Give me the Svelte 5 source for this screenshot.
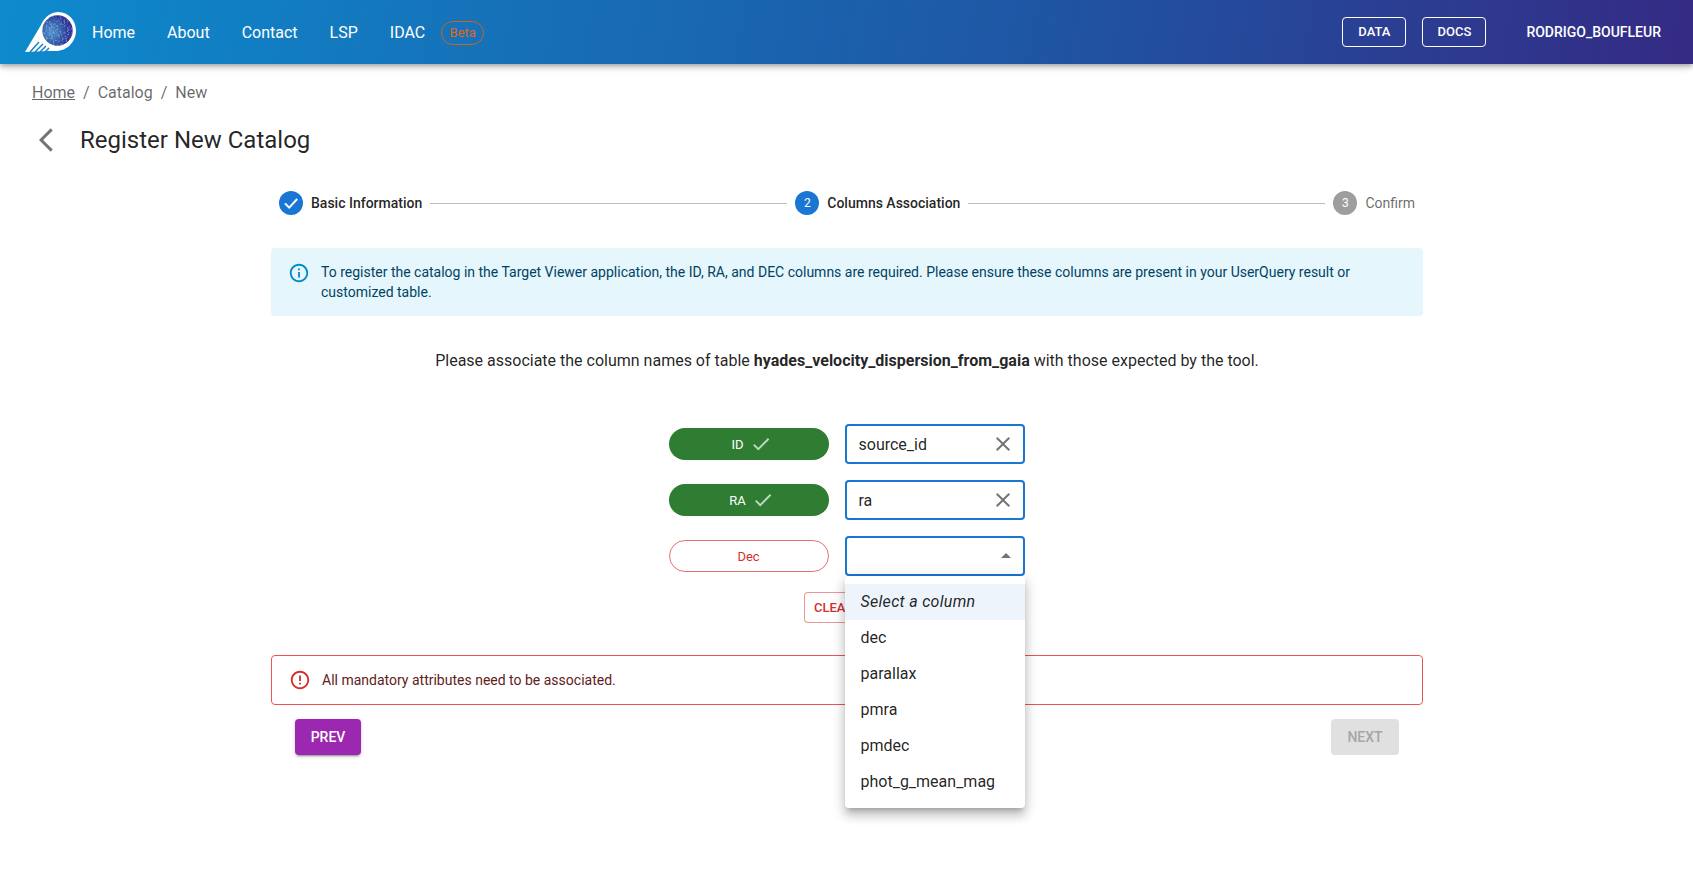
<script>
  const nav = ['Home', 'About', 'Contact', 'LSP', 'IDAC'];
  const options = ['dec', 'parallax', 'pmra', 'pmdec', 'phot_g_mean_mag'];
</script>

<header class="bar">
  <svg class="logo" viewBox="0 0 54 42" width="54" height="42" aria-hidden="true">
    <defs>
      <radialGradient id="globe" cx="0.3" cy="0.55" r="0.75">
        <stop offset="0" stop-color="#4f93cc" />
        <stop offset="0.42" stop-color="#3563ad" />
        <stop offset="0.72" stop-color="#2c3a98" />
        <stop offset="1" stop-color="#2a2a8a" />
      </radialGradient>
      <filter id="speckle" x="0" y="0" width="100%" height="100%">
        <feTurbulence type="fractalNoise" baseFrequency="0.55" numOctaves="2" seed="4" />
        <feColorMatrix values="0 0 0 0 0.55  0 0 0 0 0.65  0 0 0 0 0.95  0 0 0 1.6 -0.75" />
        <feComposite in2="SourceAlpha" operator="in" />
      </filter>
    </defs>
    <path d="M1 41 L17 14 C20 7 26 1.5 33.5 1 C44 0.5 52 9 52 19.5 C52 31 43 40 32 40 L25 40 Z" fill="#fff" />
    <circle cx="33.5" cy="19.5" r="15.2" fill="url(#globe)" />
    <circle cx="33.5" cy="19.5" r="15.2" filter="url(#speckle)" />
    <g stroke="#1180c6" stroke-width="1.4" fill="none">
      <path d="M6 41 L15 31" /><path d="M11 41 L19 33" /><path d="M16 41 L22 35" /><path d="M21 41 L25 37" />
    </g>
  </svg>
  <nav class="nav">
    {#each nav as item}
      <a class="nav-link" href="#top">{item}</a>
    {/each}
    <span class="beta">Beta</span>
  </nav>
  <div class="bar-right">
    <button class="outline">DATA</button>
    <button class="outline">DOCS</button>
    <span class="user">RODRIGO_BOUFLEUR</span>
  </div>
</header>

<main class="page">
  <div class="crumbs">
    <a href="#top">Home</a><span class="sep">/</span><span>Catalog</span><span class="sep">/</span><span>New</span>
  </div>

  <div class="title-row">
    <svg class="back" viewBox="0 0 24 24" width="28" height="28" aria-hidden="true">
      <path d="M17.77 3.77 16 2 6 12l10 10 1.77-1.77L9.54 12z" fill="#757575" />
    </svg>
    <h1>Register New Catalog</h1>
  </div>

  <section class="content">
    <div class="stepper">
      <div class="step active">
        <svg class="step-icon" viewBox="0 0 24 24" width="24" height="24" aria-hidden="true">
          <circle cx="12" cy="12" r="12" fill="#1976d2" />
          <path d="M6 12.4 10.2 16.6 18.2 8" fill="none" stroke="#fff" stroke-width="2" />
        </svg>
        <span>Basic Information</span>
      </div>
      <div class="line"></div>
      <div class="step active">
        <span class="num blue">2</span>
        <span>Columns Association</span>
      </div>
      <div class="line"></div>
      <div class="step muted">
        <span class="num grey">3</span>
        <span>Confirm</span>
      </div>
    </div>

    <div class="alert info">
      <svg viewBox="0 0 24 24" width="22" height="22" aria-hidden="true">
        <path d="M11 7h2v2h-2zm0 4h2v6h-2zm1-9C6.48 2 2 6.48 2 12s4.48 10 10 10 10-4.48 10-10S17.52 2 12 2m0 18c-4.41 0-8-3.59-8-8s3.59-8 8-8 8 3.59 8 8-3.59 8-8 8" fill="#0288d1" />
      </svg>
      <p>To register the catalog in the Target Viewer application, the ID, RA, and DEC columns are required. Please ensure these columns are present in your UserQuery result or customized table.</p>
    </div>

    <p class="lead">Please associate the column names of table <strong>hyades_velocity_dispersion_from_gaia</strong> with those expected by the tool.</p>

    <div class="assoc">
      <div class="row">
        <span class="chip ok">ID
          <svg viewBox="0 0 24 24" width="22" height="22" aria-hidden="true"><path d="M9 16.17 4.83 12l-1.42 1.41L9 19 21 7l-1.41-1.41z" fill="#fff" fill-opacity="0.7" /></svg>
        </span>
        <div class="field">
          <span class="value">source_id</span>
          <svg viewBox="0 0 24 24" width="24" height="24" aria-hidden="true"><path d="M19 6.41 17.59 5 12 10.59 6.41 5 5 6.41 10.59 12 5 17.59 6.41 19 12 13.41 17.59 19 19 17.59 13.41 12z" fill="#757575" /></svg>
        </div>
      </div>
      <div class="row">
        <span class="chip ok">RA
          <svg viewBox="0 0 24 24" width="22" height="22" aria-hidden="true"><path d="M9 16.17 4.83 12l-1.42 1.41L9 19 21 7l-1.41-1.41z" fill="#fff" fill-opacity="0.7" /></svg>
        </span>
        <div class="field">
          <span class="value">ra</span>
          <svg viewBox="0 0 24 24" width="24" height="24" aria-hidden="true"><path d="M19 6.41 17.59 5 12 10.59 6.41 5 5 6.41 10.59 12 5 17.59 6.41 19 12 13.41 17.59 19 19 17.59 13.41 12z" fill="#757575" /></svg>
        </div>
      </div>
      <div class="row">
        <span class="chip bad">Dec</span>
        <div class="field open">
          <span class="value"></span>
          <svg class="caret" viewBox="0 0 24 24" width="24" height="24" aria-hidden="true"><path d="m7 14 5-5 5 5z" fill="#757575" /></svg>
          <ul class="menu">
            <li class="hint">Select a column</li>
            {#each options as o}
              <li>{o}</li>
            {/each}
          </ul>
        </div>
      </div>
      <button class="clear">CLEAR</button>
    </div>

    <div class="alert error">
      <svg viewBox="0 0 24 24" width="22" height="22" aria-hidden="true">
        <path d="M11 15h2v2h-2zm0-8h2v6h-2zm.99-5C6.47 2 2 6.48 2 12s4.47 10 9.99 10C17.52 22 22 17.52 22 12S17.52 2 11.99 2M12 20c-4.42 0-8-3.58-8-8s3.58-8 8-8 8 3.58 8 8-3.58 8-8 8" fill="#d32f2f" />
      </svg>
      <p>All mandatory attributes need to be associated.</p>
    </div>

    <div class="actions">
      <button class="prev">PREV</button>
      <button class="next" disabled>NEXT</button>
    </div>
  </section>
</main>

<style>
  :global(body) {
    margin: 0;
    background: #fff;
    font-family: Roboto, "Liberation Sans", sans-serif;
    color: rgba(0, 0, 0, 0.87);
  }
  .bar {
    height: 64px;
    box-sizing: border-box;
    display: flex;
    align-items: center;
    padding: 0 32px 0 24px;
    background: linear-gradient(100deg, #0d8bcd 0%, #1f55a3 62%, #352a84 100%);
    box-shadow: 0 2px 4px -1px rgba(0,0,0,.2), 0 4px 5px 0 rgba(0,0,0,.14), 0 1px 10px 0 rgba(0,0,0,.12);
    position: relative;
  }
  .logo { flex: none; margin-right: 14px; }
  .nav { display: flex; align-items: center; padding-top: 1px; }
  .nav-link {
    color: #fff;
    text-decoration: none;
    font-size: 16px;
    line-height: 24px;
    margin-right: 32px;
  }
  .nav-link:last-of-type { margin-right: 16px; }
  .beta {
    box-sizing: border-box;
    height: 24px;
    width: 43px;
    border: 1px solid #c9651d;
    border-radius: 12px;
    color: #e0661a;
    font-size: 13px;
    line-height: 22px;
    text-align: center;
  }
  .bar-right { margin-left: auto; display: flex; align-items: center; }
  .outline {
    box-sizing: border-box;
    width: 64px;
    height: 30px;
    margin-right: 16px;
    padding: 0 0 2px;
    background: transparent;
    border: 1px solid #fff;
    border-radius: 4px;
    color: #fff;
    font: 500 13px/1 Roboto, sans-serif;
  }
  .user {
    margin-left: 24px;
    color: #fff;
    font-size: 14px;
    font-weight: 500;
  }
  .page {
    box-sizing: border-box;
    min-height: 824px;
    padding: 17px 32px 0;
  }
  .crumbs {
    display: flex;
    font-size: 16px;
    line-height: 24px;
    color: rgba(0,0,0,.6);
  }
  .crumbs a { color: inherit; }
  .sep { margin: 0 8px; }
  .title-row {
    display: flex;
    align-items: center;
    margin-top: 15px;
    height: 40px;
  }
  .back { margin-right: 20px; flex: none; }
  h1 { margin: 0; font-size: 24px; font-weight: 400; line-height: 32px; }
  .content {
    width: 1152px;
    margin: 31px auto 0;
    position: relative;
    left: 0.5px;
  }
  .stepper { display: flex; align-items: center; padding: 0 8px; height: 24px; }
  .step {
    display: flex;
    align-items: center;
    gap: 8px;
    font-size: 14px;
    line-height: 20px;
    white-space: nowrap;
    font-weight: 500;
  }
  .step.muted { color: rgba(0,0,0,.6); font-weight: 400; }
  .num {
    width: 24px;
    height: 24px;
    border-radius: 50%;
    color: #fff;
    font-size: 12px;
    font-weight: 400;
    text-align: center;
    line-height: 24px;
  }
  .blue { background: #1976d2; }
  .grey { background: #9e9e9e; }
  .line { flex: 1; height: 1px; background: #bdbdbd; margin: 0 8px; }
  .alert {
    box-sizing: border-box;
    display: flex;
    gap: 11px;
    border-radius: 4px;
    font-size: 14px;
    line-height: 20px;
  }
  .alert p { margin: 0; }
  .alert svg { flex: none; }
  .info {
    margin-top: 33px;
    padding: 14px 16px 14px 17px;
    height: 68px;
    background: #e5f6fd;
    color: #014361;
  }
  .lead {
    margin: 33px 0 0;
    text-align: center;
    font-size: 16px;
    line-height: 24px;
  }
  .assoc {
    margin-top: 51px;
    display: flex;
    flex-direction: column;
    align-items: center;
    position: relative;
  }
  .row {
    display: flex;
    align-items: center;
    gap: 16px;
    margin-bottom: 16px;
    position: relative;
    left: -0.5px;
  }
  .chip {
    box-sizing: border-box;
    width: 160px;
    height: 32px;
    border-radius: 16px;
    display: flex;
    align-items: center;
    justify-content: center;
    gap: 6px;
    font-size: 13px;
  }
  .chip.ok { background: #2e7d32; color: #fff; padding-left: 6px; }
  .chip.bad { border: 1px solid #e57373; color: #d32f2f; }
  .field {
    box-sizing: border-box;
    width: 180px;
    height: 40px;
    border: 2px solid #1976d2;
    border-radius: 4px;
    display: flex;
    align-items: center;
    justify-content: space-between;
    padding: 0 8px 0 12px;
    font-size: 16px;
    position: relative;
  }
  .field.open { padding-right: 5px; }
  .menu {
    position: absolute;
    z-index: 2;
    top: 38px;
    left: -2px;
    width: 180px;
    box-sizing: border-box;
    margin: 0;
    padding: 8px 0;
    list-style: none;
    background: #fff;
    border-radius: 4px;
    box-shadow: 0 5px 5px -3px rgba(0,0,0,.2), 0 8px 10px 1px rgba(0,0,0,.14), 0 3px 14px 2px rgba(0,0,0,.12);
  }
  .menu li {
    height: 36px;
    line-height: 36px;
    padding: 0 16px;
    font-size: 16px;
  }
  .menu .hint { background: #edf4fb; font-style: italic; letter-spacing: 0.3px; }
  .clear {
    box-sizing: border-box;
    width: 86px;
    height: 31px;
    padding: 0 0 0 9px;
    text-align: left;
    background: #fff;
    border: 1px solid rgba(211, 47, 47, .5);
    border-radius: 4px;
    color: #d32f2f;
    font: 500 13px/1 Roboto, sans-serif;
  }
  .error {
    margin-top: 32px;
    height: 50px;
    align-items: center;
    padding: 0 16px 0 17px;
    border: 1px solid #ef5350;
    color: #5f2120;
  }
  .actions {
    display: flex;
    justify-content: space-between;
    padding: 14px 24px 0;
  }
  .prev, .next {
    height: 36px;
    border: 0;
    border-radius: 4px;
    padding: 0;
    font: 500 14px/1 Roboto, sans-serif;
  }
  .prev {
    width: 66px;
    background: #9c27b0;
    color: #fff;
    box-shadow: 0 3px 1px -2px rgba(0,0,0,.2), 0 2px 2px 0 rgba(0,0,0,.14), 0 1px 5px 0 rgba(0,0,0,.12);
  }
  .next {
    width: 68px;
    background: #e0e0e0;
    color: #a6a6a6;
  }
</style>
